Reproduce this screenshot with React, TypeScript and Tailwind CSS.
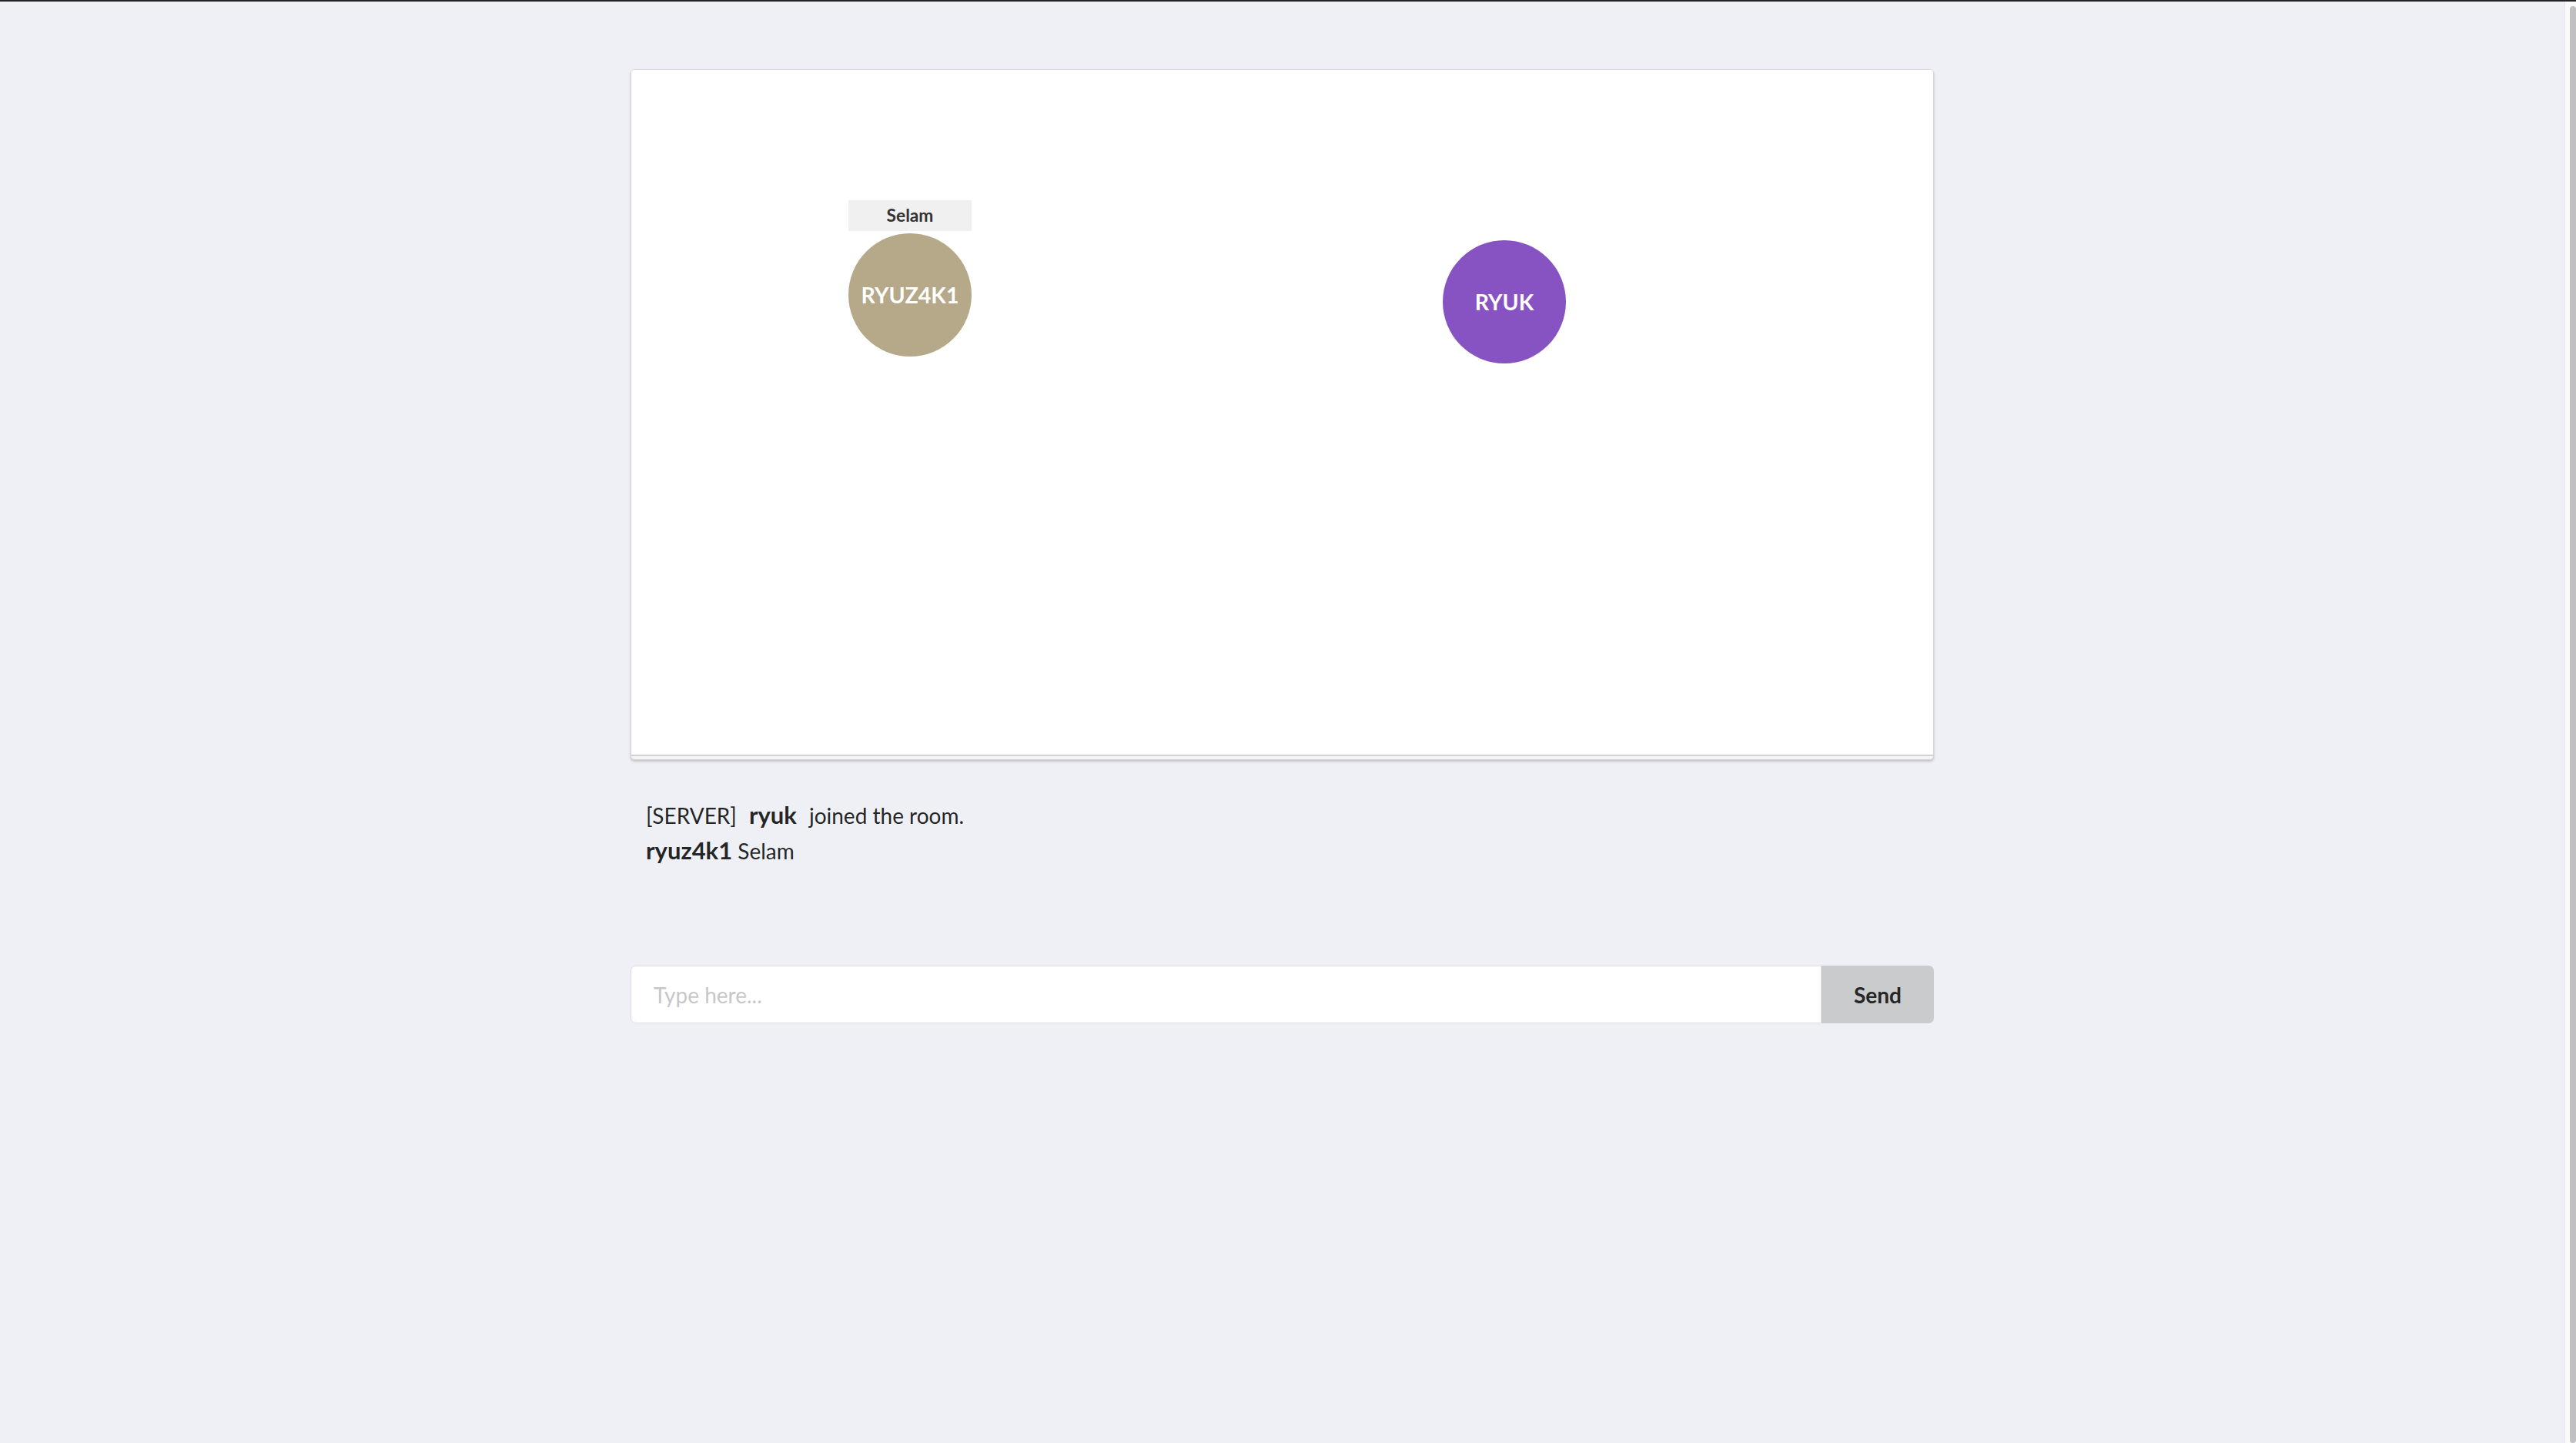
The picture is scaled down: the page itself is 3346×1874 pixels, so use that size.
import React from 'react';

function Avatar({ name, color }: { name: string; color: string }) {
  return (
    <div
      className={`w-[160px] h-[160px] rounded-full flex items-center justify-center text-white font-bold text-[28.5px] ${color}`}
    >
      {name}
    </div>
  );
}

export default function App() {
  return (
    <div className="h-screen w-full flex flex-col overflow-hidden bg-[#eff0f5] font-['Lato','Open_Sans',sans-serif] text-[rgba(0,0,0,0.87)]">
      <div className="h-[2px] w-full bg-[#222325] shrink-0" />
      <div className="flex flex-1 min-h-0">
        <main className="flex-1 pt-[88px]">
          <div className="w-[1693px] mx-auto">
            {/* room canvas */}
            <div className="rounded-[5px] border border-[#d4d4d5] bg-[#f4f4f4] pb-[4px] shadow-[0_2px_3px_rgba(34,36,38,0.22)]">
              <div className="relative h-[891px] bg-white rounded-t-[4px] border-b-2 border-[#d2d2d3]">
                <div className="absolute left-[282px] top-[169px] flex flex-col items-center gap-[3px]">
                  <div className="w-[160px] h-[40px] bg-[#f0f0f0] flex items-center justify-center text-[22.75px] font-bold text-[#333]">
                    Selam
                  </div>
                  <Avatar name="RYUZ4K1" color="bg-[#b5a989]" />
                </div>
                <div className="absolute left-[1054px] top-[221px]">
                  <Avatar name="RYUK" color="bg-[#8752c2]" />
                </div>
              </div>
            </div>

            {/* messages */}
            <div className="mt-[49px] pl-[20px] text-[28px] leading-[45px]">
              <div>
                <span className="mr-[16px]">[SERVER]</span>
                <span className="font-bold text-[31px] mr-[16px]">ryuk</span>
                <span>joined the room.</span>
              </div>
              <div>
                <span className="font-bold text-[31px]">ryuz4k1</span> Selam
              </div>
            </div>

            {/* input */}
            <div className="mt-[126px] flex h-[75px]">
              <input
                placeholder="Type here..."
                className="flex-1 min-w-0 bg-white border border-[#dcdcdd] rounded-l-[7px] px-[29px] text-[28px] outline-none placeholder:text-[#c7c7c7]"
              />
              <button className="w-[146px] bg-[#cacbcd] rounded-r-[7px] text-[28px] font-bold text-[#262626]">
                Send
              </button>
            </div>
          </div>
        </main>
        {/* scrollbar */}
        <div className="w-[15px] shrink-0 border-l border-[#e6e6e6] bg-[#fafafa] pt-[6px] pl-[6px]">
          <div className="h-full rounded-full bg-[#c1c1c1]" />
        </div>
      </div>
    </div>
  );
}
